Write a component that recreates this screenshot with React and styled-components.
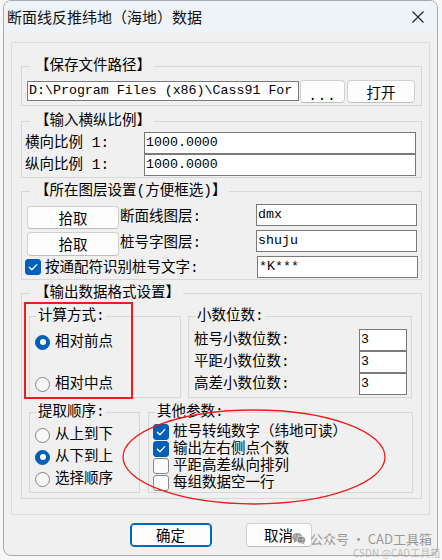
import React from "react";
import styled, { createGlobalStyle } from "styled-components";

const CJK = `"Noto Sans CJK SC", "Noto Sans", sans-serif`;
const LBL = `"Liberation Mono", "Noto Sans CJK SC", monospace`;
const MONO = `"Liberation Mono", "DejaVu Sans Mono", monospace`;

const GlobalStyle = createGlobalStyle`
  html, body { margin: 0; padding: 0; background: #f7f7f7; }
  body { font-family: ${CJK}; text-spacing-trim: space-all; }
  * { box-sizing: border-box; }
`;

const Page = styled.div`
  position: relative;
  width: 442px;
  height: 560px;
  overflow: hidden;
`;

const Window = styled.div`
  margin-left: 3px;
  width: 435px;
  height: 556px;
  border: 1px solid #a9a9a9;
  border-radius: 8px;
  overflow: hidden;
  background: #f0f0f0;
  display: flex;
  flex-direction: column;
`;

const TitleBar = styled.div`
  height: 32px;
  flex: none;
  background: #eef3f8;
  display: flex;
  align-items: center;
  justify-content: space-between;
  padding: 0 13px 0 3px;
  font: 15px/20px ${CJK};
  color: #111;
`;

const Body = styled.div`
  padding: 9px 7px 0 7px;
  display: flex;
  flex-direction: column;
`;

const Frame = styled.div`
  border: 1px solid #dcdcdc;
  padding: 15px 7px 15px 9px;
  display: flex;
  flex-direction: column;
`;

const Group = styled.fieldset`
  margin: ${(p) => p.$mt || 0}px 0 0 0;
  min-width: 0;
  border: 1px solid #d7d7d7;
  padding: ${(p) => p.$pad};
  width: ${(p) => (p.$w ? `${p.$w}px` : "auto")};
  flex: none;
`;

const Legend = styled.legend`
  margin-left: ${(p) => p.$ml}px;
  padding: 0 ${(p) => (p.$bracket ? 3 : 1)}px 0 ${(p) => (p.$bracket ? 5 : 1)}px;
  font: 14.5px/17px ${LBL};
  color: #000;
`;

const Row = styled.div`
  display: flex;
  align-items: flex-start;
  height: ${(p) => p.$h}px;
`;

const Label = styled.span`
  font: 14.5px/18px ${LBL};
  color: #000;
  white-space: nowrap;
  width: ${(p) => (p.$w ? `${p.$w}px` : "auto")};
  margin-left: ${(p) => p.$ml || 0}px;
  align-self: center;
  flex: none;
`;

const Field = styled.div`
  width: ${(p) => p.$w}px;
  height: ${(p) => p.$h || 22}px;
  margin-left: ${(p) => (p.$auto ? "auto" : `${p.$ml || 0}px`)};
  margin-right: ${(p) => p.$mr || 0}px;
  margin-top: ${(p) => p.$mt || 0}px;
  border: 1px solid #7a7a7a;
  background: #fff;
  font: 13.3px/${(p) => (p.$h || 22) - 3}px ${MONO};
  color: #000;
  padding: 0 1px;
  white-space: nowrap;
  overflow: hidden;
  flex: none;
`;

const Button = styled.button`
  width: ${(p) => p.$w}px;
  height: ${(p) => p.$h || 23}px;
  margin-left: ${(p) => p.$ml || 0}px;
  margin-top: ${(p) => p.$mt || 0}px;
  border: 1px solid ${(p) => (p.$primary ? "#0067c0" : "#d0d0d0")};
  box-shadow: ${(p) => (p.$primary ? "inset 0 0 0 1px #0067c0" : "none")};
  border-bottom-color: ${(p) => (p.$primary ? "#0067c0" : "#bdbdbd")};
  border-radius: 4px;
  background: #fdfdfd;
  font: 14.5px/18px ${CJK};
  color: #000;
  padding: 0;
  flex: none;
`;

const Dots = styled.span`
  display: inline-block;
  transform: translateY(3px);
  letter-spacing: 1px;
  font-family: ${MONO};
  font-size: 14px;
`;

const BoxCol = styled.div`
  display: flex;
  flex-direction: column;
  gap: ${(p) => p.$gap || 0}px;
  padding-left: ${(p) => p.$pl || 0}px;
`;

const Pair = styled.div`
  display: flex;
  align-items: flex-start;
  gap: ${(p) => p.$gap}px;
  margin-top: ${(p) => p.$mt || 0}px;
`;

const RadioRow = styled.div`
  display: flex;
  align-items: center;
  height: 22px;
  gap: 5px;
`;

const RadioDot = styled.span`
  width: 15px;
  height: 15px;
  border-radius: 50%;
  flex: none;
  background: ${(p) => (p.$on ? "#005fb8" : "#f7f7f7")};
  border: 1px solid ${(p) => (p.$on ? "#005fb8" : "#858585")};
  display: flex;
  align-items: center;
  justify-content: center;
  &::after {
    content: "";
    display: ${(p) => (p.$on ? "block" : "none")};
    width: 6px;
    height: 6px;
    border-radius: 50%;
    background: #fff;
  }
`;

const CheckBox = styled.span`
  width: 16px;
  height: 16px;
  flex: none;
  border-radius: 3px;
  margin-left: ${(p) => p.$ml || 0}px;
  margin-top: ${(p) => p.$mt || 0}px;
  background: ${(p) => (p.$on ? "#005fb8" : "#fbfbfb")};
  border: 1px solid ${(p) => (p.$on ? "#005fb8" : "#858585")};
  display: flex;
  align-items: center;
  justify-content: center;
`;

const CheckRow = styled.div`
  display: flex;
  align-items: center;
  height: 17px;
  gap: 4px;
`;

const Footer = styled.div`
  display: flex;
  justify-content: center;
  gap: 34px;
  margin-top: 8px;
`;

const RedBox = styled.div`
  position: absolute;
  left: 24px;
  top: 302px;
  width: 109px;
  height: 97px;
  border: 2px solid #ee1c1c;
  pointer-events: none;
`;

const Overlay = styled.svg`
  position: absolute;
  left: 0;
  top: 0;
  pointer-events: none;
`;

const Watermark = styled.div`
  position: absolute;
  left: 292px;
  top: 530px;
  display: flex;
  align-items: center;
  gap: 4px;
  font: 13px/17px ${CJK};
  color: rgba(120, 120, 120, 0.75);
  white-space: nowrap;
`;

const Csdn = styled.div`
  position: absolute;
  left: 353px;
  top: 547px;
  font: 10px/12px ${CJK};
  color: rgba(150, 150, 150, 0.6);
  white-space: nowrap;
`;

const Check = () => (
  <svg width="12" height="12" viewBox="0 0 12 12">
    <path d="M2.3 6.3 L4.9 8.7 L9.8 3.6" fill="none" stroke="#fff" strokeWidth="1.3" strokeLinecap="round" strokeLinejoin="round" />
  </svg>
);

const Radio = ({ on, children }) => (
  <RadioRow>
    <RadioDot $on={on} />
    <Label>{children}</Label>
  </RadioRow>
);

const Cb = ({ on, children }) => (
  <CheckRow>
    <CheckBox $on={on}>{on && <Check />}</CheckBox>
    <Label>{children}</Label>
  </CheckRow>
);

const WM = "rgba(120,120,120,0.75)";

export default function App() {
  return (
    <>
      <GlobalStyle />
      <Page>
        <Window>
          <TitleBar>
            <span>断面线反推纬地（海地）数据</span>
            <svg width="12" height="12" viewBox="0 0 12 12">
              <path d="M0.5 0.5 L11.5 11.5 M11.5 0.5 L0.5 11.5" stroke="#222" strokeWidth="1.1" />
            </svg>
          </TitleBar>
          <Body>
            <Frame>
              <Group $pad="5px 0 2px 5px">
                <Legend $ml={3} $bracket>【保存文件路径】</Legend>
                <Row $h={23}>
                  <Field $w={272} $h={20} $mt={1}>D:\Program Files (x86)\Cass91 For</Field>
                  <Button $w={45} $ml={1}><Dots>...</Dots></Button>
                  <Button $w={68} $ml={2}>打开</Button>
                </Row>
              </Group>

              <Group $mt={7} $pad="2px 0 1px 3px">
                <Legend $ml={5} $bracket>【输入横纵比例】</Legend>
                <Row $h={22}>
                  <Label $w={119}>横向比例 1:</Label>
                  <Field $w={272}>1000.0000</Field>
                </Row>
                <Row $h={22}>
                  <Label $w={119}>纵向比例 1:</Label>
                  <Field $w={272}>1000.0000</Field>
                </Row>
              </Group>

              <Group $mt={5} $pad="4px 4px 0 5px">
                <Legend $ml={3} $bracket>【所在图层设置(方便框选)】</Legend>
                <Row $h={26}>
                  <Button $w={92} $mt={2}>拾取</Button>
                  <Label $ml={1}>断面线图层:</Label>
                  <Field $w={161} $auto>dmx</Field>
                </Row>
                <Row $h={26}>
                  <Button $w={92} $mt={2} $h={24}>拾取</Button>
                  <Label $ml={1}>桩号字图层:</Label>
                  <Field $w={161} $auto>shuju</Field>
                </Row>
                <Row $h={23}>
                  <CheckBox $on $ml={-2} $mt={3}><Check /></CheckBox>
                  <Label $ml={4}>按通配符识别桩号文字:</Label>
                  <Field $w={161} $auto $mr={-1}>*K***</Field>
                </Row>
              </Group>

              <Group $mt={5} $pad="6px 0 5px 7px">
                <Legend $ml={1} $bracket>【输出数据格式设置】</Legend>
                <Pair $gap={7}>
                  <Group $w={152} $pad="6px 0 2px 0">
                    <Legend $ml={7}>计算方式:</Legend>
                    <BoxCol $pl={5} $gap={20}>
                      <Radio on>相对前点</Radio>
                      <Radio>相对中点</Radio>
                    </BoxCol>
                  </Group>
                  <Group $w={224} $pad="4px 0 2px 5px">
                    <Legend $ml={2}>小数位数:</Legend>
                    <Row $h={22}>
                      <Label $w={165}>桩号小数位数:</Label>
                      <Field $w={48}>3</Field>
                    </Row>
                    <Row $h={22}>
                      <Label $w={165}>平距小数位数:</Label>
                      <Field $w={48}>3</Field>
                    </Row>
                    <Row $h={22}>
                      <Label $w={165}>高差小数位数:</Label>
                      <Field $w={48}>3</Field>
                    </Row>
                  </Group>
                </Pair>
                <Pair $gap={8} $mt={6}>
                  <Group $w={111} $pad="3px 0 2px 0">
                    <Legend $ml={7}>提取顺序:</Legend>
                    <BoxCol $pl={5}>
                      <Radio>从上到下</Radio>
                      <Radio on>从下到上</Radio>
                      <Radio>选择顺序</Radio>
                    </BoxCol>
                  </Group>
                  <Group $w={265} $pad="2px 0 1px 0">
                    <Legend $ml={7}>其他参数:</Legend>
                    <BoxCol $pl={4}>
                      <Cb on>桩号转纯数字（纬地可读）</Cb>
                      <Cb on>输出左右侧点个数</Cb>
                      <Cb>平距高差纵向排列</Cb>
                      <Cb>每组数据空一行</Cb>
                    </BoxCol>
                  </Group>
                </Pair>
              </Group>
            </Frame>
            <Footer>
              <Button $w={82} $h={24} $primary>确定</Button>
              <Button $w={66} $h={24}>取消</Button>
            </Footer>
          </Body>
        </Window>

        <RedBox />
        <Overlay width="442" height="560" viewBox="0 0 442 560">
          <ellipse cx="254" cy="457" rx="131" ry="47" fill="none" stroke="#ee1c1c" strokeWidth="1.3" />
        </Overlay>
        <Watermark>
          <svg width="14" height="13" viewBox="0 0 16 14">
            <ellipse cx="6" cy="5.5" rx="5.6" ry="4.8" fill={WM} />
            <path d="M2.5 9 L2 12 L5 10 Z" fill={WM} />
            <ellipse cx="10.6" cy="8.6" rx="4.8" ry="4.1" fill={WM} stroke="#f0f0f0" strokeWidth="0.9" />
            <path d="M13.5 11.5 L14.2 13.8 L11.8 12.4 Z" fill={WM} />
            <circle cx="4" cy="4" r="0.8" fill="#f0f0f0" />
            <circle cx="7.6" cy="4" r="0.8" fill="#f0f0f0" />
            <circle cx="9" cy="8" r="0.7" fill="#f0f0f0" />
            <circle cx="12.2" cy="8" r="0.7" fill="#f0f0f0" />
          </svg>
          <span>公众号 · CAD工具箱</span>
        </Watermark>
        <Csdn>CSDN @CAD工具箱</Csdn>
      </Page>
    </>
  );
}
